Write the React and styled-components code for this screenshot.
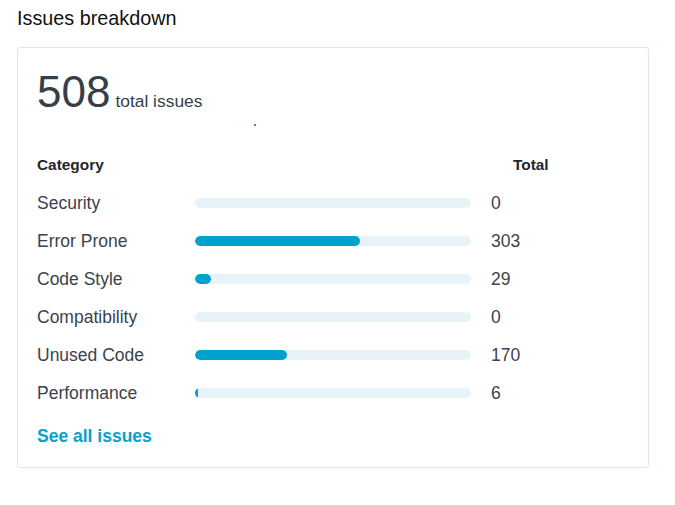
import React from 'react'
import styled, { createGlobalStyle } from 'styled-components'

const GlobalStyle = createGlobalStyle`
  body {
    margin: 0;
    background: #fff;
    font-family: "Liberation Sans", Arial, sans-serif;
  }
`

const TOTAL = 508

const categories = [
  { name: 'Security', count: 0 },
  { name: 'Error Prone', count: 303 },
  { name: 'Code Style', count: 29 },
  { name: 'Compatibility', count: 0 },
  { name: 'Unused Code', count: 170 },
  { name: 'Performance', count: 6 },
]

const App = () => {
  return (
    <Wrapper>
      <GlobalStyle />
      <Title>Issues breakdown</Title>
      <Card>
        <Summary>
          <BigNumber>{TOTAL}</BigNumber>
          <SummaryLabel>total issues</SummaryLabel>
        </Summary>
        <DotRow><Dot /></DotRow>
        <Table>
          <HeadCell>Category</HeadCell>
          <span />
          <HeadCell $total>Total</HeadCell>
          {categories.map((c) => (
            <React.Fragment key={c.name}>
              <Label>{c.name}</Label>
              <Track>
                <Fill style={{ width: `${(c.count / TOTAL) * 100}%` }} />
              </Track>
              <Value>{c.count}</Value>
            </React.Fragment>
          ))}
        </Table>
        <SeeAll href="#">See all issues</SeeAll>
      </Card>
    </Wrapper>
  )
}

export default App

const Wrapper = styled.div`
  padding: 5px 17px 0 17px;
  width: 632px;
`

const Title = styled.h2`
  margin: 0;
  font-size: 19.8px;
  font-weight: 400;
  line-height: 26px;
  color: #111;
`

const Card = styled.div`
  margin-top: 16px;
  border: 1px solid #d7e9f4;
  border-radius: 3px;
  padding: 20px 19px 20px 19px;
  height: 421px;
  box-sizing: border-box;
`

const Summary = styled.div`
  display: flex;
  align-items: baseline;
  gap: 5px;
  color: #363f48;
`

const BigNumber = styled.span`
  font-size: 44px;
  line-height: 48px;
`

const SummaryLabel = styled.span`
  font-size: 17.4px;
`

const DotRow = styled.div`
  height: 20px;
  position: relative;
`

const Dot = styled.span`
  position: absolute;
  left: 217px;
  top: 8px;
  width: 2px;
  height: 2px;
  border-radius: 50%;
  background: #3a33d8;
`

const Table = styled.div`
  display: grid;
  grid-template-columns: 138px 276px auto;
  column-gap: 20px;
  align-items: center;
  margin-top: 10px;
`

const HeadCell = styled.div`
  font-size: 15.4px;
  font-weight: 700;
  color: #1f262d;
  height: 38px;
  line-height: 38px;
  padding-left: ${(p) => (p.$total ? '22px' : '0')};
`

const Label = styled.div`
  font-size: 17.5px;
  color: #3a434d;
  height: 38px;
  line-height: 38px;
`

const Track = styled.div`
  height: 10px;
  border-radius: 5px;
  background: #e8f2f9;
  overflow: hidden;
`

const Fill = styled.div`
  height: 100%;
  border-radius: 5px;
  background: #00a1cf;
`

const Value = styled.div`
  font-size: 17.5px;
  color: #3a434d;
  line-height: 38px;
`

const SeeAll = styled.a`
  display: inline-block;
  margin-top: 14px;
  font-size: 17.5px;
  font-weight: 700;
  color: #0aa1cd;
  text-decoration: none;
`
